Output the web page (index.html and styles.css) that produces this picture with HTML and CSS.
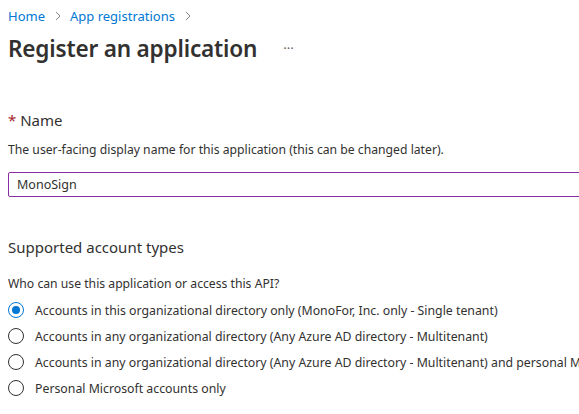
FILE: index.html
```html
<!DOCTYPE html>
<html>
<head>
<meta charset="utf-8">
<link rel="stylesheet" href="styles.css">
</head>
<body>
<div class="page">
  <nav class="crumbs">
    <a class="crumb">Home</a>
    <span class="chev"><svg width="8" height="10" viewBox="0 0 8 10"><path d="M2 1l4 4-4 4" fill="none" stroke="#8a8886" stroke-width="1"/></svg></span>
    <a class="crumb">App registrations</a>
    <span class="chev"><svg width="8" height="10" viewBox="0 0 8 10"><path d="M2 1l4 4-4 4" fill="none" stroke="#8a8886" stroke-width="1"/></svg></span>
  </nav>
  <div class="titlebar">
    <h1 class="title">Register an application</h1>
    <span class="more">···</span>
  </div>

  <section class="field">
    <h2 class="label"><span class="req">*</span> Name</h2>
    <p class="desc">The user-facing display name for this application (this can be changed later).</p>
    <div class="input">MonoSign</div>
  </section>

  <section class="field types">
    <h2 class="label">Supported account types</h2>
    <p class="desc">Who can use this application or access this API?</p>
    <ul class="radios">
      <li class="radio checked"><span class="dot"></span><span>Accounts in this organizational directory only (MonoFor, Inc. only - Single tenant)</span></li>
      <li class="radio"><span class="dot"></span><span>Accounts in any organizational directory (Any Azure AD directory - Multitenant)</span></li>
      <li class="radio"><span class="dot"></span><span>Accounts in any organizational directory (Any Azure AD directory - Multitenant) and personal M</span></li>
      <li class="radio"><span class="dot"></span><span>Personal Microsoft accounts only</span></li>
    </ul>
  </section>
</div>
</body>
</html>
```
FILE: styles.css
```css
html, body {
  margin: 0;
  padding: 0;
  background: #ffffff;
  overflow: hidden;
}
body {
  font-family: "Noto Sans", "Open Sans", sans-serif;
  color: #323130;
  width: 579px;
  height: 414px;
}
.page {
  padding: 6px 0 0 8px;
}
.crumbs {
  display: flex;
  align-items: center;
  height: 20px;
  font-size: 13px;
}
.crumb {
  color: #0078d4;
}
.chev {
  display: flex;
  align-items: center;
  margin: 0 8px 0 9px;
}
.titlebar {
  display: flex;
  align-items: center;
  height: 44px;
}
.title {
  margin: 0;
  font-size: 22.6px;
  font-weight: 600;
  color: #323130;
  letter-spacing: -0.2px;
}
.more {
  margin-left: 26px;
  font-size: 13px;
  color: #605e5c;
}
.field {
  margin-top: 40px;
}
.label {
  margin: 0;
  font-size: 15px;
  font-weight: 400;
  line-height: 20px;
  color: #323130;
}
.req {
  color: #a4262c;
}
.desc {
  margin: 12px 0 0;
  font-size: 12.2px;
  line-height: 16px;
  color: #323130;
}
.input {
  margin-top: 14px;
  margin-right: -20px;
  height: 23px;
  border: 1px solid #8a2da5;
  border-radius: 2px;
  font-size: 12.5px;
  line-height: 23px;
  padding-left: 8px;
  color: #323130;
}
.types {
  margin-top: 40px;
}
.types .desc {
  margin-top: 19px;
}
.radios {
  list-style: none;
  margin: 5px 0 0;
  padding: 0;
}
.radio {
  display: flex;
  align-items: center;
  height: 26px;
  font-size: 12.3px;
  white-space: nowrap;
  overflow: hidden;
}
.dot {
  box-sizing: border-box;
  width: 16px;
  height: 16px;
  border: 1px solid #323130;
  border-radius: 50%;
  margin-right: 11px;
  flex: none;
  display: flex;
  align-items: center;
  justify-content: center;
}
.checked .dot {
  border-color: #0078d4;
}
.checked .dot::after {
  content: "";
  width: 8px;
  height: 8px;
  border-radius: 50%;
  background: #0078d4;
}
```
